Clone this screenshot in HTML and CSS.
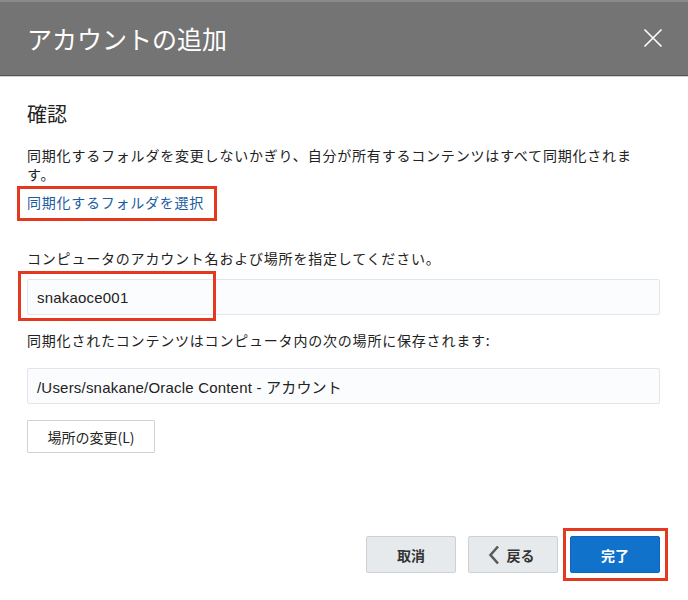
FILE: index.html
```html
<!DOCTYPE html>
<html lang="ja">
<head>
<meta charset="utf-8">
<title>アカウントの追加</title>
<link rel="stylesheet" href="styles.css">
</head>
<body>
<div class="dialog">
  <header class="header">
    <h1 class="title">アカウントの追加</h1>
    <button class="close" aria-label="閉じる">
      <svg width="20" height="20" viewBox="0 0 20 20"><path d="M1.5 1.5 L18.5 18.5 M18.5 1.5 L1.5 18.5" stroke="#fff" stroke-width="1.6" fill="none"/></svg>
    </button>
  </header>
  <main class="content">
    <h2 class="heading">確認</h2>
    <p class="text para">同期化するフォルダを変更しないかぎり、自分が所有するコンテンツはすべて同期化されます。</p>
    <div class="link-row"><a class="link mark mark-link" href="#">同期化するフォルダを選択</a></div>
    <p class="text label1">コンピュータのアカウント名および場所を指定してください。</p>
    <div class="field field1">
      <div class="input">snakaoce001</div>
      <span class="mark-box mark-input"></span>
    </div>
    <p class="text label2">同期化されたコンテンツはコンピュータ内の次の場所に保存されます:</p>
    <div class="field field2">
      <div class="input">/Users/snakane/Oracle Content - アカウント</div>
    </div>
    <button class="change">場所の変更(L)</button>
    <div class="footer">
      <button class="btn">取消</button>
      <button class="btn back">
        <svg width="12" height="20" viewBox="0 0 12 20"><polyline points="10,1.5 2.5,10 10,18.5" fill="none" stroke="#5a5a5a" stroke-width="2.6"/></svg>
        <span>戻る</span>
      </button>
      <div class="done-wrap">
        <button class="btn primary">完了</button>
        <span class="mark-box mark-done"></span>
      </div>
    </div>
  </main>
</div>
</body>
</html>
```

FILE: styles.css
```css
* { box-sizing: border-box; }
html, body { margin: 0; padding: 0; background: #fff; }
body {
  font-family: "Noto Sans CJK JP", "Liberation Sans", sans-serif;
  color: #222;
  width: 688px;
  height: 600px;
  overflow: hidden;
}
.header {
  height: 76px;
  background: #747474;
  border-top: 2px solid #8a8a8a;
  border-bottom: 1px solid #555;
  box-shadow: 0 1px 0 #d2d2d2;
  display: flex;
  align-items: center;
  justify-content: space-between;
  padding: 0 25px 0 27px;
}
.title {
  margin: 0;
  font-size: 25px;
  font-weight: 400;
  color: #fff;
  line-height: 30px;
  padding-bottom: 2px;
}
.close {
  background: none;
  border: 0;
  padding: 0;
  width: 20px;
  height: 20px;
  display: flex;
  margin-bottom: 2px;
}
.content {
  padding: 0 28px 0 27px;
}
.heading {
  margin: 24px 0 0;
  font-size: 20px;
  line-height: 28px;
  font-weight: 400;
  color: #222;
}
.text {
  margin: 0;
  font-size: 14px;
  line-height: 19px;
  letter-spacing: 0.8px;
  color: #222;
}
.para { margin-top: 18px; max-width: 614px; }
.link-row { margin-top: 8px; line-height: 19px; }
.link {
  font-size: 14px;
  letter-spacing: 0.75px;
  color: #1b5c9e;
  text-decoration: none;
  position: relative;
  display: inline-block;
  line-height: 19px;
}
.mark-link::after {
  content: "";
  position: absolute;
  left: -10px;
  right: -13px;
  top: -7px;
  bottom: -9px;
  border: 3px solid #e5391f;
}
.label1 { margin-top: 37px; }
.label2 { margin-top: 16px; }
.field { position: relative; }
.field1 { margin-top: 11px; }
.field2 { margin-top: 18px; }
.input {
  height: 36px;
  border: 1px solid #e2e5e9;
  border-radius: 2px;
  background: #fbfcfd;
  font-family: "Liberation Sans", "Noto Sans CJK JP", sans-serif;
  font-size: 15px;
  letter-spacing: 0.2px;
  color: #222;
  padding: 0 9px;
  display: flex;
  align-items: center;
}
.mark-box {
  position: absolute;
  border: 3px solid #e5391f;
  pointer-events: none;
}
.mark-input {
  left: -9px;
  top: -8px;
  width: 198px;
  height: 50px;
}
.change {
  margin-top: 16px;
  width: 128px;
  height: 33px;
  border: 1px solid #cfd2d5;
  background: #fff;
  border-radius: 1px;
  font-family: "Noto Sans CJK JP", "Liberation Sans", sans-serif;
  font-size: 14px;
  color: #222;
  padding: 0;
  display: block;
}
.footer {
  margin-top: 83px;
  display: flex;
  justify-content: flex-end;
  gap: 12px;
}
.btn {
  width: 90px;
  height: 37px;
  border: 1px solid #cdd1d5;
  border-radius: 2px;
  background: #e7eaed;
  font-family: "Noto Sans CJK JP", "Liberation Sans", sans-serif;
  font-size: 14px;
  font-weight: 700;
  color: #333;
  padding: 0;
  display: flex;
  align-items: center;
  justify-content: center;
}
.back { gap: 7px; padding-right: 4px; }
.done-wrap { position: relative; }
.primary {
  background: #1172cb;
  border-color: #0e66b8;
  color: #fff;
}
.mark-done {
  left: -7px;
  top: -8px;
  right: -8px;
  bottom: -8px;
}
```
